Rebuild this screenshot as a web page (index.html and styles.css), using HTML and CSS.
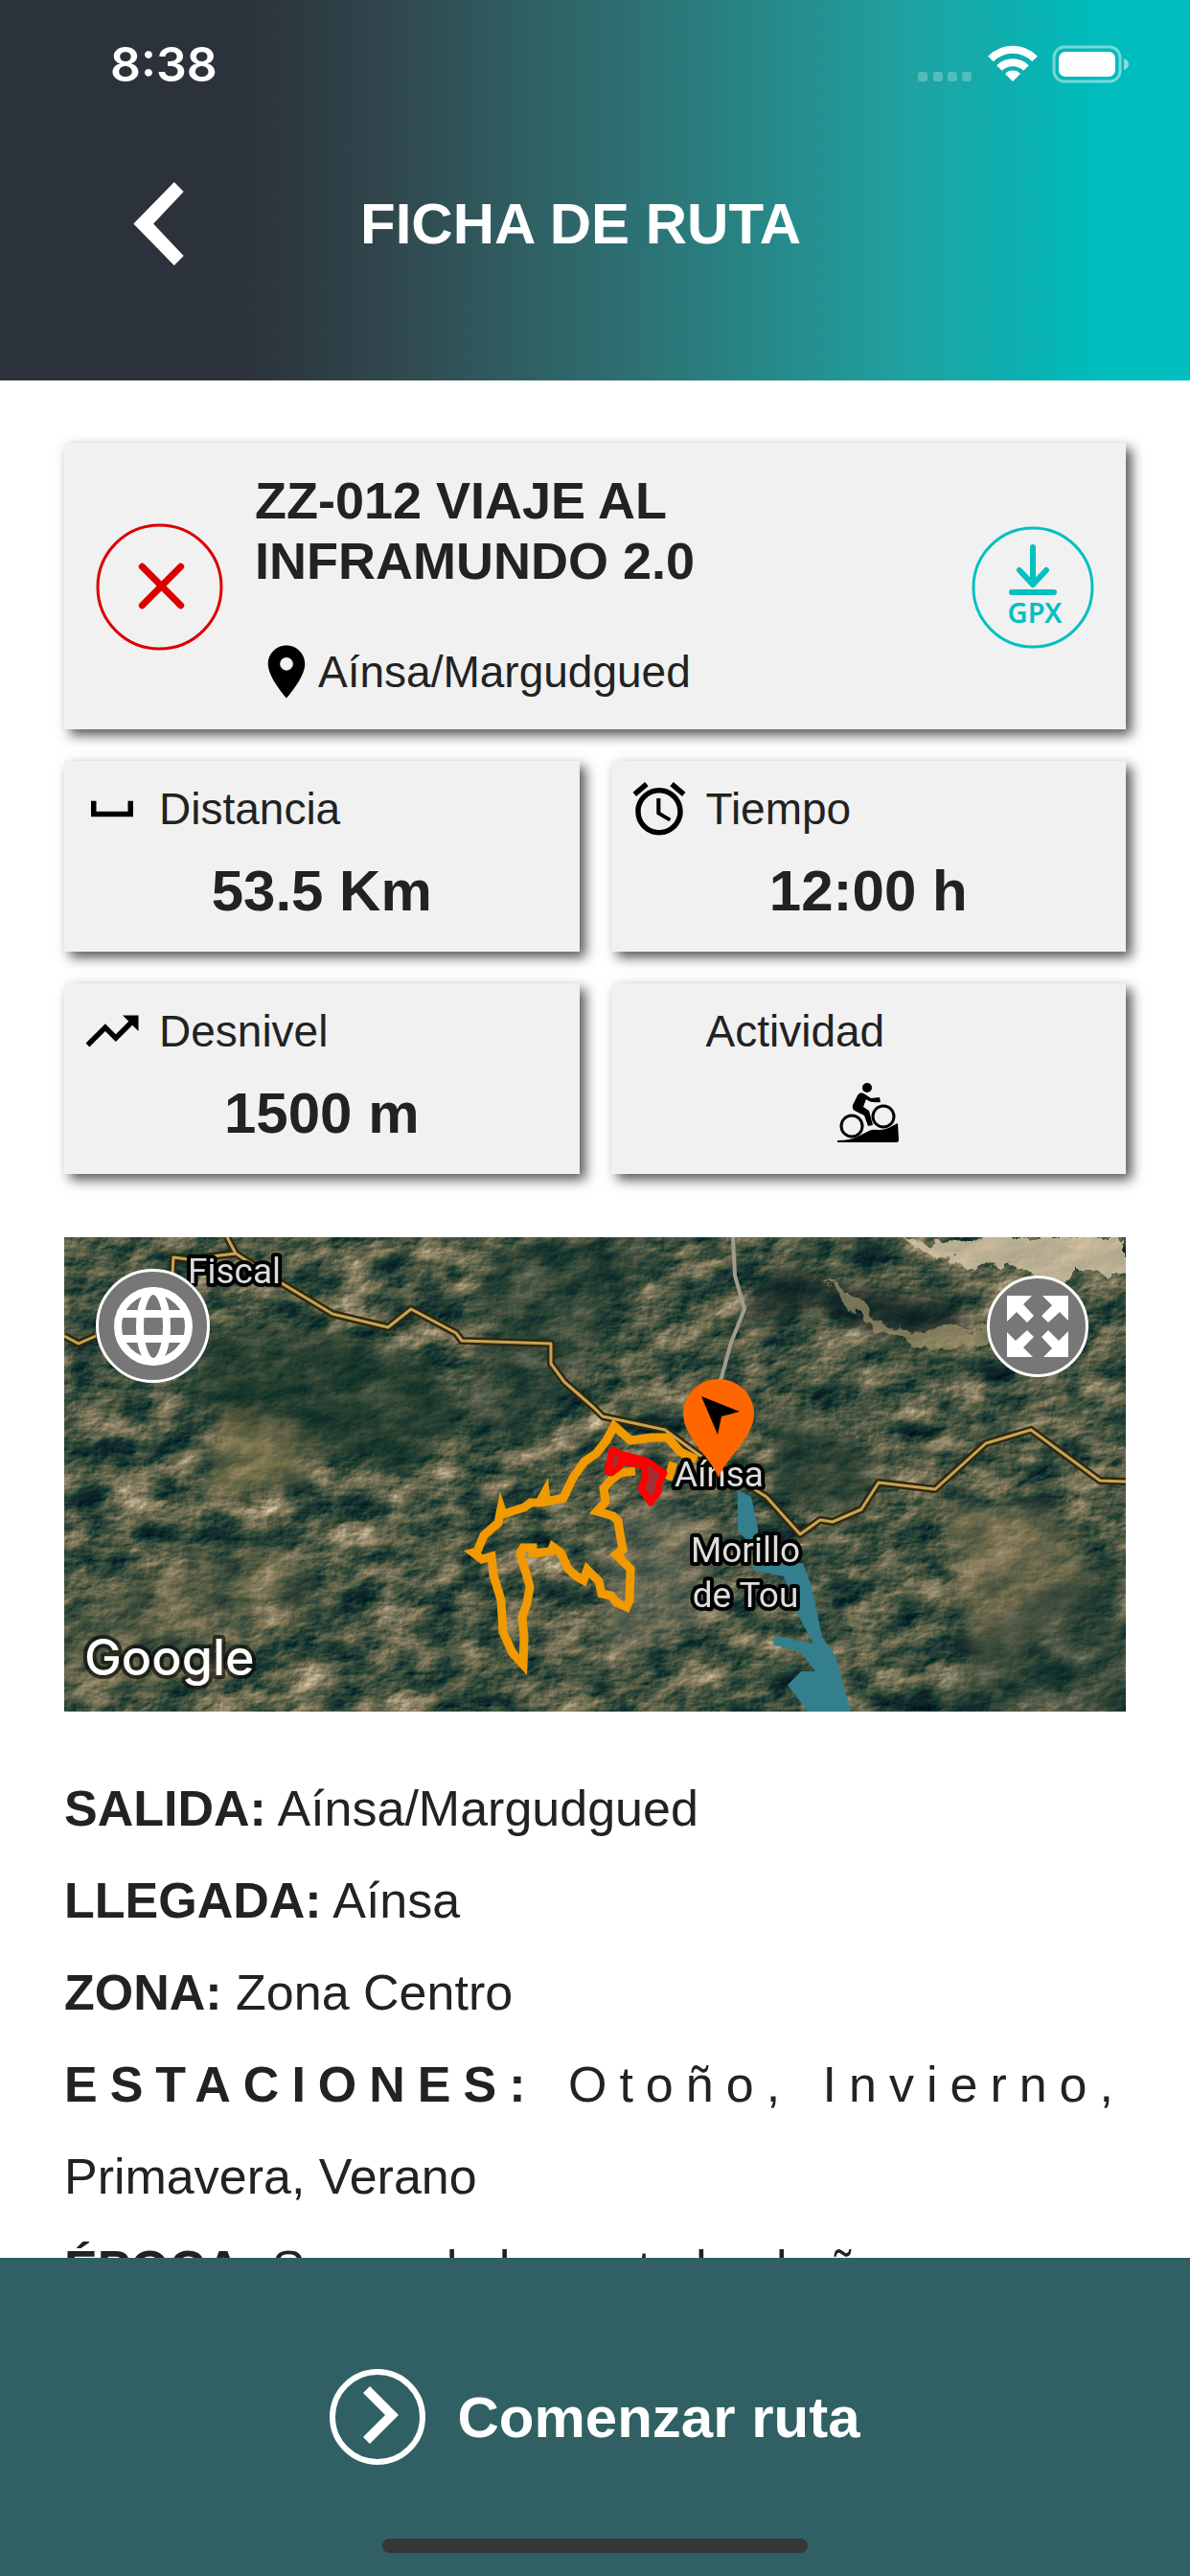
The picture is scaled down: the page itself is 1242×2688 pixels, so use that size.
FILE: index.html
```html
<!DOCTYPE html>
<html lang="es">
<head>
    <meta charset="UTF-8">
    <meta name="viewport" content="width=device-width, initial-scale=1.0">
    <title>Ficha de ruta</title>
    <link rel="stylesheet" href="styles.css">
</head>
<body>

    <header class="header">
        <div class="status-bar">
            <span class="clock">8:38</span>
            <svg class="status-icons" viewBox="0 0 222 40" aria-hidden="true">
                <g fill="#fff" fill-opacity="0.25">
                    <rect x="0" y="28" width="10" height="10" rx="3"/>
                    <rect x="16" y="28" width="10" height="10" rx="3"/>
                    <rect x="31" y="28" width="10" height="10" rx="3"/>
                    <rect x="46" y="28" width="10" height="10" rx="3"/>
                </g>
                <g fill="none" stroke="#fff" stroke-width="8">
                    <path d="M76 14.500a32 32 0 0 1 46 0"/>
                    <path d="M85 24a20 20 0 0 1 28 0"/>
                </g>
                <path d="M99 38l-8-8a11 11 0 0 1 16 0z" fill="#fff"/>
                <rect x="142" y="2" width="69" height="36" rx="11" fill="none" stroke="#fff" stroke-opacity="0.45" stroke-width="3"/>
                <rect x="147" y="7" width="59" height="26" rx="7" fill="#fff"/>
                <path d="M215 14q5 2 5 6t-5 6z" fill="#fff" fill-opacity="0.5"/>
            </svg>
        </div>
        <div class="nav">
            <button class="back" aria-label="Volver">
                <svg viewBox="0 0 54 88"><path d="M43 0L53 10 21 44l32 34-10 10L0 44z" fill="#fff"/></svg>
            </button>
            <h1>FICHA DE RUTA</h1>
        </div>
    </header>

    <main class="content">
        <section class="card route">
            <svg class="route-status" viewBox="0 0 132 132" role="img" aria-label="No disponible">
                <circle cx="66" cy="66" r="64" fill="none" stroke="#dc0000" stroke-width="3"/>
                <path d="M48 45l40 40M88 45L48 85" stroke="#dc0000" stroke-width="7" stroke-linecap="round"/>
            </svg>
            <div class="route-info">
                <h2>ZZ-012 VIAJE AL INFRAMUNDO 2.0</h2>
                <div class="place">
                    <svg class="icon" viewBox="0 0 24 24"><path d="M12 2C8.130 2 5 5.130 5 9c0 5.250 7 13 7 13s7-7.750 7-13c0-3.870-3.130-7-7-7zm0 9.500a2.500 2.500 0 0 1 0-5 2.500 2.500 0 0 1 0 5z"/></svg>
                    <span>Aínsa/Margudgued</span>
                </div>
            </div>
            <button class="gpx" aria-label="Descargar GPX">
                <svg viewBox="0 0 128 128">
                    <g fill="none" stroke="#04c0c0" stroke-linecap="round" stroke-linejoin="round">
                        <circle cx="64" cy="64" r="62" stroke-width="3"/>
                        <path d="M64 22v39M50 46l14 15 14-15M42 69h44" stroke-width="6"/>
                    </g>
                    <text x="66" y="101" text-anchor="middle" class="gpx-text">GPX</text>
                </svg>
            </button>
        </section>

        <section class="stats">
            <div class="card stat">
                <div class="stat-label">
                    <svg class="icon" viewBox="0 0 24 24"><path d="M18 9v4H6V9H4v6h16V9z"/></svg>
                    <span>Distancia</span>
                </div>
                <div class="stat-value">53.5 Km</div>
            </div>
            <div class="card stat">
                <div class="stat-label">
                    <svg class="icon" viewBox="0 0 24 24"><path d="M22 5.720l-4.600-3.860-1.290 1.530 4.600 3.860L22 5.720zM7.880 3.390L6.600 1.860 2 5.710l1.290 1.530 4.590-3.850zM12.500 8H11v6l4.750 2.850.75-1.230-4-2.370V8zM12 4c-4.970 0-9 4.030-9 9s4.020 9 9 9c4.970 0 9-4.030 9-9s-4.030-9-9-9zm0 16c-3.870 0-7-3.130-7-7s3.130-7 7-7 7 3.130 7 7-3.130 7-7 7z"/></svg>
                    <span>Tiempo</span>
                </div>
                <div class="stat-value">12:00 h</div>
            </div>
            <div class="card stat">
                <div class="stat-label">
                    <svg class="icon" viewBox="0 0 24 24"><path d="M16 6l2.290 2.290-4.880 4.880-4-4L2 16.590 3.410 18l6-6 4 4 6.300-6.290L22 12V6z"/></svg>
                    <span>Desnivel</span>
                </div>
                <div class="stat-value">1500 m</div>
            </div>
            <div class="card stat">
                <div class="stat-label">
                    <span class="icon"></span>
                    <span>Actividad</span>
                </div>
                <div class="stat-value">
                    <svg class="icon" viewBox="0 0 66 64" role="img" aria-label="Bicicleta de montaña">
                        <circle cx="32" cy="6" r="5"/>
                        <path d="M22 14q3-5 8-1l6 4 9-1 1 5q-8 1-12-1l-3-2-3 8 6 4 4 15-5 1-4-11-10-5q-3-2-2-6z"/>
                        <circle cx="16" cy="46" r="11" fill="none" stroke="#000" stroke-width="3"/>
                        <circle cx="49" cy="36" r="11" fill="none" stroke="#000" stroke-width="3"/>
                        <path d="M1 61q14 0 21-4l12-6q4-2 10-1 8 0 14-4l6-3 1 17q0 3-2 3H1z"/>
                    </svg>
                </div>
            </div>
        </section>

        <section class="map">
            <svg class="map-view" viewBox="0 0 1108 495" role="img" aria-label="Mapa de la ruta">
                <defs>
                    <!-- relieve del terreno -->
                    <filter id="terrain" x="0" y="0" width="100%" height="100%" color-interpolation-filters="sRGB">
                        <feTurbulence type="fractalNoise" baseFrequency="0.022 0.034" numOctaves="7" seed="14"/>
                        <feColorMatrix values="0.9 0.7 0.5 0 -0.56  0.9 0.7 0.5 0 -0.56  0.9 0.7 0.5 0 -0.56  0 0 0 0 1"/>
                        <feComponentTransfer>
                            <feFuncR type="table" tableValues="0.06 0.09 0.17 0.29 0.42 0.54 0.68"/>
                            <feFuncG type="table" tableValues="0.15 0.20 0.27 0.34 0.42 0.51 0.63"/>
                            <feFuncB type="table" tableValues="0.16 0.19 0.22 0.26 0.32 0.40 0.51"/>
                        </feComponentTransfer>
                        <feConvolveMatrix order="3" kernelMatrix="-1 -1 0 -1 1 1 0 1 1" divisor="1" preserveAlpha="true"/>
                    </filter>
                    <filter id="soft"><feGaussianBlur stdDeviation="9"/></filter>
                    <filter id="edge" x="-10%" y="-10%" width="120%" height="120%">
                        <feTurbulence type="fractalNoise" baseFrequency="0.050" numOctaves="4" seed="3"/>
                        <feDisplacementMap in="SourceGraphic" scale="26" xChannelSelector="R" yChannelSelector="G"/>
                    </filter>
                </defs>
                <rect width="1108" height="495" filter="url(#terrain)"/>
                <g filter="url(#soft)">
                    <path d="M150 95l130 0 100 30 40 60-60 60-90-20-80-30-60-20z" fill="#12302a" opacity="0.600"/>
                    <path d="M440 20l80-20 100 0-80 140-60 80-60-30z" fill="#1a342e" opacity="0.450"/>
                    <path d="M690 90l60-60 80 20 110 20 0 30-90 5-60-30z" fill="#0e2422" opacity="0.700"/>
                    <path d="M740 170l110 60-20 70-90-30z" fill="#1a352c" opacity="0.600"/>
                    <path d="M165 185l80 20 10 50-110 20z" fill="#897c50" opacity="0.550"/>
                    <path d="M0 400l120-60 100-20 60 60-200 90H0z" fill="#79704f" opacity="0.300"/>
                    <path d="M920 280l110 0 50 90-130 90z" fill="#8b7b58" opacity="0.500"/>
                    <path d="M560 300l70-30 50 40-10 90-100 40z" fill="#8c8570" opacity="0.350"/>
                    <path d="M1108 330l-140 60-60 105h200z" fill="#17322c" opacity="0.450"/>
                </g>
                <g filter="url(#edge)">
                    <path d="M870 5l90-5 148 0 0 40-50-10-20 50-30-45-70-8z" fill="#d9c8a9" opacity="0.800"/>
                    <path d="M790 45l40 20 18 24 42 10 70-5 10 15-60 8-60-18-30-22z" fill="#a99a70" opacity="0.650"/>
                </g>
                <path d="M698 0l2 40 10 35-14 35-11 40" fill="none" stroke="#a39c8c" stroke-width="4"/>
                <path d="M703 264L717 271 724 304 722 340 771 340 780 364 791 417 805 437 821 495 776 495 755 467 769 453 784 453 769 433 740 425 742 416 782 424 762 387 751 354 719 347 722 325 703 307z" fill="#337f8d"/>
                <g fill="none" stroke-linejoin="round">
                    <g stroke="#322610" stroke-width="8">
                        <path id="road" d="M0 103l15 8 18-8M113 38l1-17 15 2 50-6M170 0l9 17 48 31 53 32 58 14 24-19 47 25 6 8 93 3v21l14 19 31 27 9 9 65 14 34 25 72 45 35 39 21-15 13 2 30-13 18-28 59 7 53-48 47-14 72 53 27 1"/>
                    </g>
                    <use href="#road" stroke="#c4a552" stroke-width="3"/>
                </g>
                <path class="track" d="M660 232L643 224 630 209 613 209 591 212 574 197 566 212 555 226 543 234 531 251 521 272 503 276 502 266 496 277 487 277 480 282 458 289 456 283 453 298 438 311 431 328 427 329 436 336 446 333 448 352 456 379 458 412 468 434 479 446 480 419 478 396 483 382 486 365 482 350 478 338 476 329 479 324 489 324 489 330 508 328 510 323 518 329 526 346 535 354 542 358 546 347 558 359 561 372 571 374 576 381 587 386 590 379 591 346 576 331 583 326 580 309 578 296 573 291 556 286 565 276 563 262 570 254 580 246 596 244M630 253L636 235"/>
                <path class="zone" d="M572 222l-5 22 4 2 9-7 1-6 24 6 2 11-5 12 10 15 8-11 1-10 5-10-17-12-26-7z"/>
                <g class="town">
                    <text x="129" y="48">Fiscal</text>
                    <text x="637" y="260">Aínsa</text>
                    <text x="711" y="339" text-anchor="middle">Morillo</text>
                    <text x="711" y="386" text-anchor="middle">de Tou</text>
                </g>
                <path d="M683 251c-7-20-37-42-37-67a37 36 0 0 1 74 0c0 25-30 47-37 67z" fill="#f60"/>
                <path d="M665 166l40 16-19 5-4 19z" fill="#000"/>
                <text class="brand" x="21" y="457">Google</text>
            </svg>
            <button class="map-btn map-type" aria-label="Tipo de mapa">
                <svg viewBox="0 0 82 82" fill="none" stroke="#fff" stroke-width="8">
                    <circle cx="41" cy="41" r="37"/>
                    <ellipse cx="41" cy="41" rx="14" ry="37"/>
                    <path d="M8 28h66M8 54h66"/>
                </svg>
            </button>
            <button class="map-btn map-expand" aria-label="Ampliar mapa">
                <svg viewBox="0 0 64 64" fill="#fff">
                    <path id="arrow" d="M0 0h26l-9 9 11 12-7 7-11-11-10 10z"/>
                    <use href="#arrow" transform="rotate(90 32 32)"/>
                    <use href="#arrow" transform="rotate(180 32 32)"/>
                    <use href="#arrow" transform="rotate(270 32 32)"/>
                </svg>
            </button>
        </section>

        <section class="details">
            <p><strong>SALIDA:</strong> Aínsa/Margudgued</p>
            <p><strong>LLEGADA:</strong> Aínsa</p>
            <p><strong>ZONA:</strong> Zona Centro</p>
            <p><span class="spread"><strong>ESTACIONES:</strong> Otoño, Invierno,</span> Primavera, Verano</p>
            <p><strong>ÉPOCA:</strong> Se puede hacer todo el año</p>
        </section>
    </main>

    <footer class="footer">
        <button class="start">
            <svg viewBox="0 0 100 100" aria-hidden="true">
                <circle cx="50" cy="50" r="47" fill="none" stroke="#fff" stroke-width="6"/>
                <path d="M42 18l30 30-30 30-7-7 23-23-23-23z" fill="#fff"/>
            </svg>
            <span>Comenzar ruta</span>
        </button>
        <div class="home-bar"></div>
    </footer>

</body>
</html>
```
FILE: styles.css
```css
* {
    box-sizing: border-box;
}
body {
    margin: 0;
    height: 100vh;
    display: flex;
    flex-direction: column;
    font-family: "Liberation Sans", Arial, sans-serif;
    color: #222;
    background-color: #fff;
}
h1, h2, p {
    margin: 0;
}
svg {
    display: block;
}
button {
    padding: 0;
    border: none;
    background: none;
    color: inherit;
    font-family: inherit;
    cursor: pointer;
}

/* Cabecera */
.header {
    flex: none;
    padding: 36px 62px 120px 115px;
    color: #fff;
    background: linear-gradient(90deg, #2c323b 0%, #2c323b 20%, #30464c 32%, #2f5f63 44%, #2e6e70 52%, #278787 64%, #1fa3a3 77%, #0cb0b0 86%, #00bcbc 92%, #00bfc0 100%);
}
.status-bar {
    display: flex;
    justify-content: space-between;
    align-items: center;
}
.clock {
    font-family: Inter, sans-serif;
    font-size: 50px;
    line-height: 62px;
    font-weight: 600;
}
.status-icons {
    width: 222px;
    height: 40px;
}
.nav {
    display: grid;
    grid-template-columns: 1fr auto 1fr;
    align-items: center;
    margin-top: 92px;
    padding: 0 107px 0 24px;
}
.back svg {
    width: 54px;
    height: 87px;
}
.nav h1 {
    font-size: 60px;
    line-height: 72px;
}

/* Contenido */
.content {
    flex: 1;
    min-height: 0;
    padding: 65px 67px 0;
    overflow-y: auto;
    scrollbar-width: none;
}
.card {
    background-color: #f1f1f1;
    box-shadow: 6px 6px 12px #555;
}
.icon {
    flex: none;
    width: 66px;
    height: 66px;
}
.route {
    display: flex;
    align-items: center;
    gap: 33px;
    padding: 29px 33px 27px;
}
.route-status {
    flex: none;
    width: 133px;
    height: 133px;
}
.route-info {
    flex: 1;
}
.route-info h2 {
    max-width: 560px;
    font-size: 54px;
    line-height: 63px;
}
.place {
    display: flex;
    align-items: center;
    margin-top: 51px;
    font-size: 46px;
}
.gpx svg {
    width: 128px;
    height: 128px;
}
.gpx-text {
    font-family: "Noto Sans", sans-serif;
    font-size: 29px;
    font-weight: 600;
    fill: #04c0c0;
}

.stats {
    display: grid;
    grid-template-columns: 1fr 1fr;
    gap: 33px;
    margin-top: 33px;
}
.stat {
    padding: 17px 17px 28px;
}
.stat-label {
    display: flex;
    align-items: center;
    gap: 16px;
    font-size: 46px;
}
.stat-value {
    display: flex;
    justify-content: center;
    align-items: center;
    height: 72px;
    margin-top: 16px;
    font-size: 60px;
    font-weight: bold;
}

/* Mapa */
.map {
    position: relative;
    margin-top: 66px;
}
.map-view {
    width: 100%;
}
.track {
    fill: none;
    stroke: #f09a00;
    stroke-width: 9;
}
.zone {
    fill: #a03038;
    stroke: #f00;
    stroke-width: 7;
    stroke-linejoin: round;
}
.town, .brand {
    stroke: #000;
    stroke-linejoin: round;
    paint-order: stroke;
}
.town {
    font-family: Roboto, sans-serif;
    font-size: 37px;
    fill: #ddd;
    stroke-width: 8px;
}
.brand {
    font-family: Inter, sans-serif;
    font-size: 52px;
    font-weight: 500;
    fill: #fff;
    stroke-width: 8px;
    stroke-opacity: 0.6;
}
.map-btn {
    position: absolute;
    display: flex;
    justify-content: center;
    align-items: center;
    border: 3px solid #fff;
    border-radius: 50%;
    background-color: #777;
}
.map-type {
    top: 33px;
    left: 33px;
    width: 119px;
    height: 119px;
}
.map-type svg {
    width: 82px;
}
.map-expand {
    top: 40px;
    right: 39px;
    width: 106px;
    height: 106px;
}
.map-expand svg {
    width: 64px;
}

/* Detalles */
.details {
    margin-top: 53px;
    font-size: 52px;
    line-height: 96px;
    text-align: justify;
}
.spread {
    letter-spacing: 13px;
}

/* Pie */
.footer {
    flex: none;
    display: flex;
    flex-direction: column;
    align-items: center;
    gap: 77px;
    padding: 116px 0 24px;
    color: #fff;
    background-color: #306064;
}
.start {
    display: flex;
    align-items: center;
    gap: 33px;
    font-size: 60px;
    font-weight: bold;
}
.start svg {
    width: 100px;
    height: 100px;
}
.home-bar {
    width: 444px;
    height: 15px;
    border-radius: 8px;
    background-color: #363636;
}
```
